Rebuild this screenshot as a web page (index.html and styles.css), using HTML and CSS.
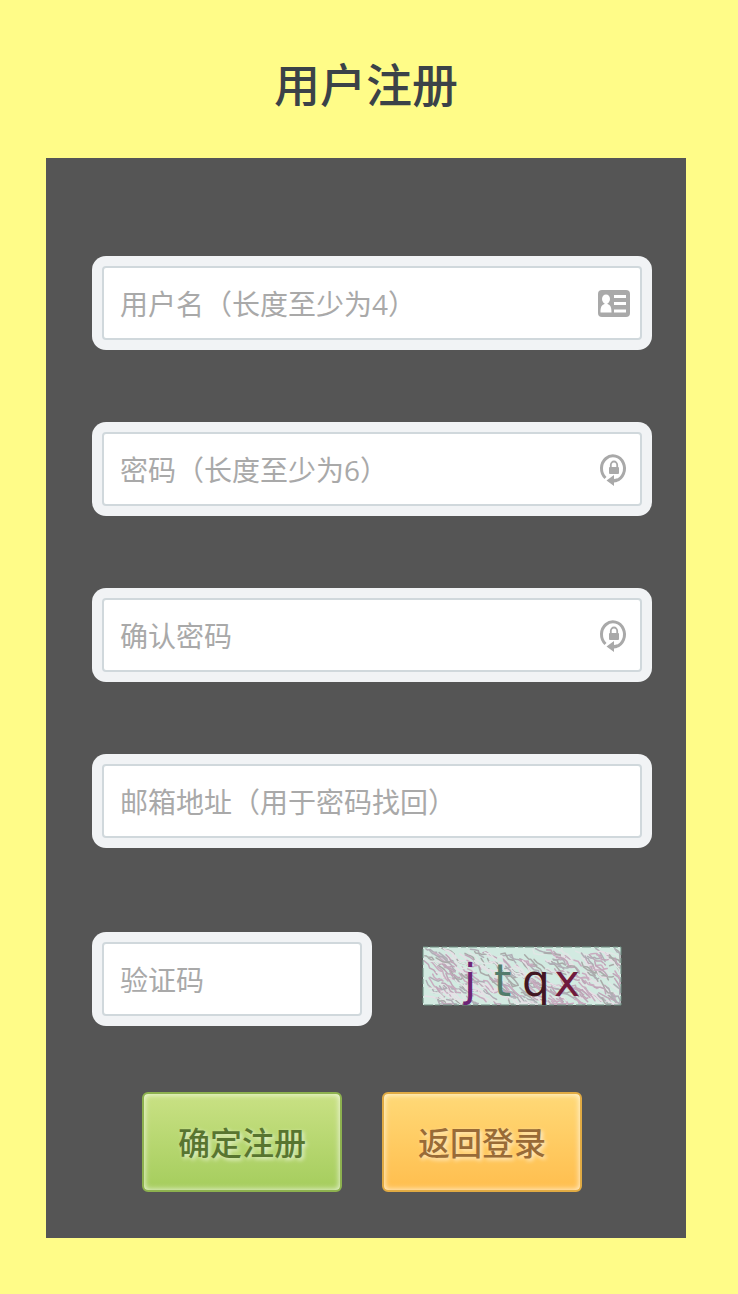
FILE: index.html
```html
<!DOCTYPE html>
<html lang="zh-CN">
<head>
<meta charset="utf-8">
<meta name="viewport" content="width=device-width, initial-scale=1">
<title>用户注册</title>
<link rel="stylesheet" href="styles.css">
</head>
<body>
<svg class="defs" aria-hidden="true">
  <symbol id="icon-lock" viewBox="0 0 32 36">
    <path d="M7.500 27A11.500 12.600 0 1 1 18 29.600" fill="none" stroke="currentColor" stroke-width="3"/>
    <path d="M8.500 29.500l7.500-5.500v4l3-.5v3.500l-3 .5v3.500z" fill="currentColor"/>
    <path d="M12.800 17v-3a3.200 3.500 0 0 1 6.400 0v3" fill="none" stroke="currentColor" stroke-width="1.800"/>
    <rect x="11" y="16" width="10" height="7" rx="1" fill="currentColor"/>
  </symbol>
</svg>
<main class="page">
  <h1 class="title">用户注册</h1>
  <form class="panel">
    <div class="fields">
      <div class="field">
        <input class="input" type="text" aria-label="用户名" placeholder="用户名（长度至少为4）">
        <svg class="icon" viewBox="0 0 32 36" aria-hidden="true">
          <rect y="5" width="32" height="27" rx="4" fill="currentColor"/>
          <ellipse cx="8" cy="14" rx="4" ry="4.5" fill="#fff"/>
          <path d="M6.500 17h3v2c3 1 4 3 4 8.500h-11c0-5.500 1-7.500 4-8.500z" fill="#fff"/>
          <path d="M16 11.500h12M16 18.500h12M16 26h12" stroke="#fff" stroke-width="3"/>
        </svg>
      </div>
      <div class="field">
        <input class="input" type="password" aria-label="密码" placeholder="密码（长度至少为6）">
        <svg class="icon" aria-hidden="true"><use href="#icon-lock"/></svg>
      </div>
      <div class="field">
        <input class="input" type="password" aria-label="确认密码" placeholder="确认密码">
        <svg class="icon" aria-hidden="true"><use href="#icon-lock"/></svg>
      </div>
      <div class="field">
        <input class="input" type="email" aria-label="邮箱地址" placeholder="邮箱地址（用于密码找回）">
      </div>
    </div>
    <div class="verify">
      <div class="field verify-field">
        <input class="input" type="text" aria-label="验证码" placeholder="验证码">
      </div>
      <svg class="captcha" viewBox="0 0 200 60" role="img" aria-label="验证码图片">
        <rect x="1" y="1" width="198" height="58" fill="#d2eae1"/>
        <g id="noise" fill="none" stroke-linecap="round"></g>
        <rect x="1" y="1" width="198" height="58" fill="none" stroke="#6f8f82" stroke-dasharray="5 2 9 3"/>
        <g class="captcha-text">
          <text x="42" y="50" fill="#6d2476">j</text>
          <text x="72" y="50" fill="#527c6c">t</text>
          <text x="100" y="50" fill="#421622">q</text>
          <text x="132" y="50" fill="#701b3d">x</text>
        </g>
      </svg>
    </div>
    <div class="actions">
      <button class="button button-green" type="submit">确定注册</button>
      <button class="button button-orange" type="button">返回登录</button>
    </div>
  </form>
</main>
<script src="captcha.js"></script>
</body>
</html>
```
FILE: styles.css
```css
* {
  box-sizing: border-box;
}

body {
  margin: 0;
  background: #fffc88;
  font-family: "Open Sans", "Noto Sans CJK SC", sans-serif;
}

.defs {
  display: none;
}

.page {
  padding: 48px 52px 56px 46px;
}

.title {
  margin: 0 0 38px;
  font-size: 46px;
  line-height: 72px;
  font-weight: 500;
  text-align: center;
  color: #3b4248;
}

.panel {
  padding: 98px 34px 46px 46px;
  background: #555;
}

.fields {
  display: grid;
  gap: 72px;
}

.field {
  position: relative;
  padding: 10px;
  border-radius: 14px;
  background: #f1f3f5;
}

.input {
  display: block;
  width: 100%;
  height: 74px;
  padding: 2px 16px 0;
  border: 2px solid #d0d8dc;
  border-radius: 4px;
  background: #fff;
  color: #555;
  font: 400 28px/40px "Open Sans", "Noto Sans CJK SC", sans-serif;
}

.input::placeholder {
  color: #a9a9a9;
  opacity: 1;
}

.icon {
  position: absolute;
  top: 29px;
  right: 22px;
  width: 32px;
  height: 36px;
  color: #a9a9a9;
  pointer-events: none;
}

.verify {
  display: flex;
  align-items: center;
  gap: 50px;
  margin-top: 84px;
  padding-right: 30px;
}

.verify-field {
  flex: 1;
  min-width: 0;
}

.captcha {
  flex: none;
  width: 200px;
  height: 60px;
  margin-bottom: 6px;
}

.captcha-text {
  font: 44px "DejaVu Sans", sans-serif;
}

.actions {
  display: flex;
  gap: 40px;
  margin-top: 66px;
  padding-left: 50px;
}

.button {
  width: 200px;
  height: 100px;
  padding: 2px 0 0;
  border: 2px solid;
  border-radius: 6px;
  font: 500 32px/48px "Open Sans", "Noto Sans CJK SC", sans-serif;
  cursor: pointer;
}

.button-green {
  border-color: #8db14f;
  background: linear-gradient(#c9e184, #a5cd5d);
  box-shadow: inset 0 0 6px rgba(255, 255, 255, 0.9);
  color: #587530;
  text-shadow: 2px 2px 4px rgba(255, 255, 255, 0.7);
}

.button-orange {
  border-color: #e0aa43;
  background: linear-gradient(#ffd977, #ffbe4e);
  box-shadow: inset 0 0 6px rgba(255, 255, 255, 0.9);
  color: #996b37;
  text-shadow: 2px 2px 4px rgba(255, 255, 255, 0.7);
}
```
FILE: captcha.js
```js
// Fixed-seed generator, so the background pattern is stable between loads.
let seed = 17;
function random() {
  seed = (seed * 16807) % 2147483647;
  return seed / 2147483647;
}

const noise = document.getElementById("noise");
const colors = ["#bfa6b8", "#b0aeb6", "#c9acc0", "#e7dfe6", "#a9aaa9", "#e0e6e5"];

for (let i = 0; i < 330; i += 1) {
  let x = 2 + random() * 192;
  let y = 2 + random() * 54;
  let d = `M${x.toFixed(1)} ${y.toFixed(1)}`;
  for (let step = 0; step < 4; step += 1) {
    x = Math.min(198, x + 1 + random() * 4);
    y = Math.min(58, y + random() * 6 - 1);
    d += `L${x.toFixed(1)} ${y.toFixed(1)}`;
  }
  const path = document.createElementNS("http://www.w3.org/2000/svg", "path");
  path.setAttribute("d", d);
  path.setAttribute("stroke", colors[i % colors.length]);
  path.setAttribute("stroke-width", "1.5");
  noise.appendChild(path);
}
```
